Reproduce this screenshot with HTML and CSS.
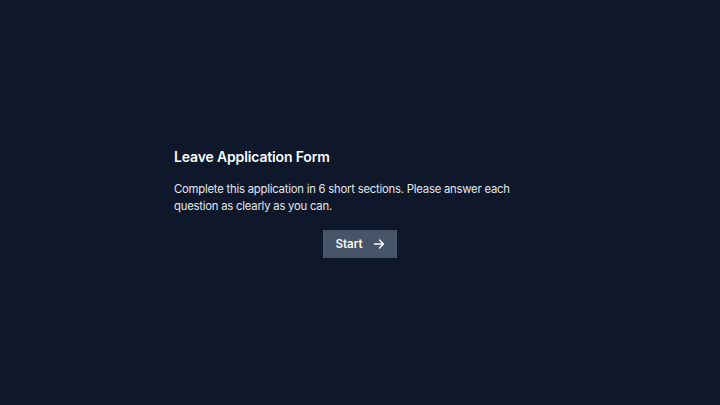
FILE: index.html
```html
<!DOCTYPE html>
<html>
<head>
<meta charset="utf-8">
<link rel="stylesheet" href="styles.css">
</head>
<body>
<main class="page">
  <section class="card">
    <h1 class="title">Leave Application Form</h1>
    <p class="desc">Complete this application in 6 short sections. Please answer each question as clearly as you can.</p>
    <div class="actions">
      <button class="start">Start
        <svg class="arrow" width="12" height="12" viewBox="0 0 12 12" fill="none" stroke="currentColor" stroke-width="1.4" stroke-linecap="round" stroke-linejoin="round"><path d="M1.5 6h9M6.5 2l4 4-4 4"/></svg>
      </button>
    </div>
  </section>
</main>
</body>
</html>
```
FILE: styles.css
```css
html, body {
  margin: 0;
  padding: 0;
  background: #0f172a;
  height: 100%;
}
body {
  font-family: Inter, "Noto Sans", sans-serif;
  color: #f1f5f9;
}
.page {
  height: 405px;
  display: flex;
  align-items: center;
  justify-content: center;
}
.card {
  width: 372px;
  display: flex;
  flex-direction: column;
}
.title {
  margin: 0;
  font-size: 14px;
  font-weight: 600;
  line-height: 18px;
  letter-spacing: -0.15px;
  color: #f8fafc;
}
.desc {
  margin: 15px 0 0;
  font-size: 11.3px;
  line-height: 17px;
  letter-spacing: -0.22px;
  color: #e2e8f0;
}
.actions {
  display: flex;
  justify-content: center;
  margin-top: 15px;
}
.start {
  display: flex;
  align-items: center;
  gap: 10px;
  height: 28px;
  padding: 0 12px;
  background: #475569;
  border: none;
  color: #f8fafc;
  font-family: inherit;
  font-size: 11.5px;
  font-weight: 600;
}
.arrow {
  display: block;
}
```
